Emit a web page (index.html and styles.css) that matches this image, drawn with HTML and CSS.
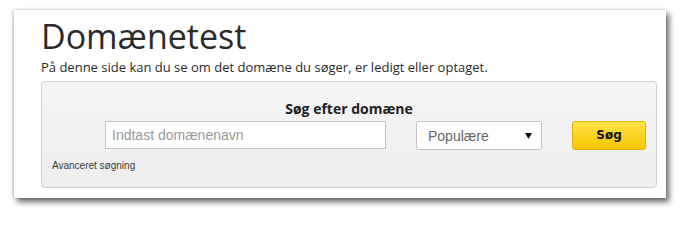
FILE: index.html
```html
<!DOCTYPE html>
<html lang="da">
<head>
<meta charset="utf-8">
<title>Domænetest</title>
<link rel="stylesheet" href="styles.css">
</head>
<body>
<div class="card">
  <h1 class="title">Domænetest</h1>
  <p class="lead">På denne side kan du se om det domæne du søger, er ledigt eller optaget.</p>
  <div class="search-box">
    <div class="search-title">Søg efter domæne</div>
    <div class="search-row">
      <div class="field">Indtast domænenavn</div>
      <div class="select">
        <span>Populære</span>
        <svg class="arrow" width="7" height="6" viewBox="0 0 7 6"><polygon points="0,0 7,0 3.5,6" fill="#111"/></svg>
      </div>
      <div class="btn">Søg</div>
    </div>
    <div class="advanced">Avanceret søgning</div>
  </div>
</div>
</body>
</html>
```

FILE: styles.css
```css
html, body {
  margin: 0;
  padding: 0;
  background: #ffffff;
}
body {
  min-height: 218px;
  padding-top: 10px;
  box-sizing: border-box;
}
.card {
  margin: 0 0 0 14px;
  width: 652px;
  height: 188px;
  box-sizing: border-box;
  padding: 7px 0 0 27px;
  background: #ffffff;
  box-shadow: 3px 4px 6px rgba(0, 0, 0, 0.6), -1px 0 3px rgba(0, 0, 0, 0.2);
}
.title {
  margin: 0;
  font-family: "Open Sans", sans-serif;
  font-weight: 400;
  font-size: 34px;
  line-height: 38px;
  color: #2b2b2b;
}
.lead {
  margin: 3px 0 0 0;
  font-family: "Open Sans", sans-serif;
  font-size: 13px;
  line-height: 18px;
  color: #2b2b2b;
}
.search-box {
  margin-top: 5px;
  width: 616px;
  height: 107px;
  box-sizing: border-box;
  border: 1px solid #d2d2d2;
  border-radius: 4px;
  background: linear-gradient(#f5f5f5, #eeeeee);
  padding: 18px 10px 0 10px;
}
.search-title {
  text-align: center;
  font-family: "Open Sans", sans-serif;
  font-weight: 700;
  font-size: 14px;
  line-height: 18px;
  color: #222;
}
.search-row {
  margin-top: 3px;
  display: flex;
  justify-content: flex-end;
  gap: 30px;
  height: 29px;
}
.field {
  width: 281px;
  height: 28px;
  box-sizing: border-box;
  border: 1px solid #c4c4c4;
  background: #fff;
  padding-left: 6px;
  font-family: "Liberation Sans", Arial, sans-serif;
  font-size: 14px;
  line-height: 26px;
  color: #9a9a9a;
}
.select {
  width: 126px;
  height: 29px;
  box-sizing: border-box;
  border: 1px solid #c4c4c4;
  border-radius: 2px;
  background: #fff;
  padding: 0 9px 0 11px;
  display: flex;
  align-items: center;
  justify-content: space-between;
  font-family: "Liberation Sans", Arial, sans-serif;
  font-size: 14px;
  color: #666;
}
.arrow {
  display: block;
}
.btn {
  width: 74px;
  height: 29px;
  box-sizing: border-box;
  border: 1px solid #e2b300;
  border-radius: 3px;
  background: linear-gradient(#ffe347, #f7c600);
  font-family: "DejaVu Sans", Verdana, sans-serif;
  font-weight: 700;
  font-size: 12px;
  line-height: 27px;
  text-align: center;
  color: #111;
}
.advanced {
  margin-top: 10px;
  font-family: "Liberation Sans", Arial, sans-serif;
  font-size: 10px;
  line-height: 12px;
  color: #3a3a3a;
}
```
